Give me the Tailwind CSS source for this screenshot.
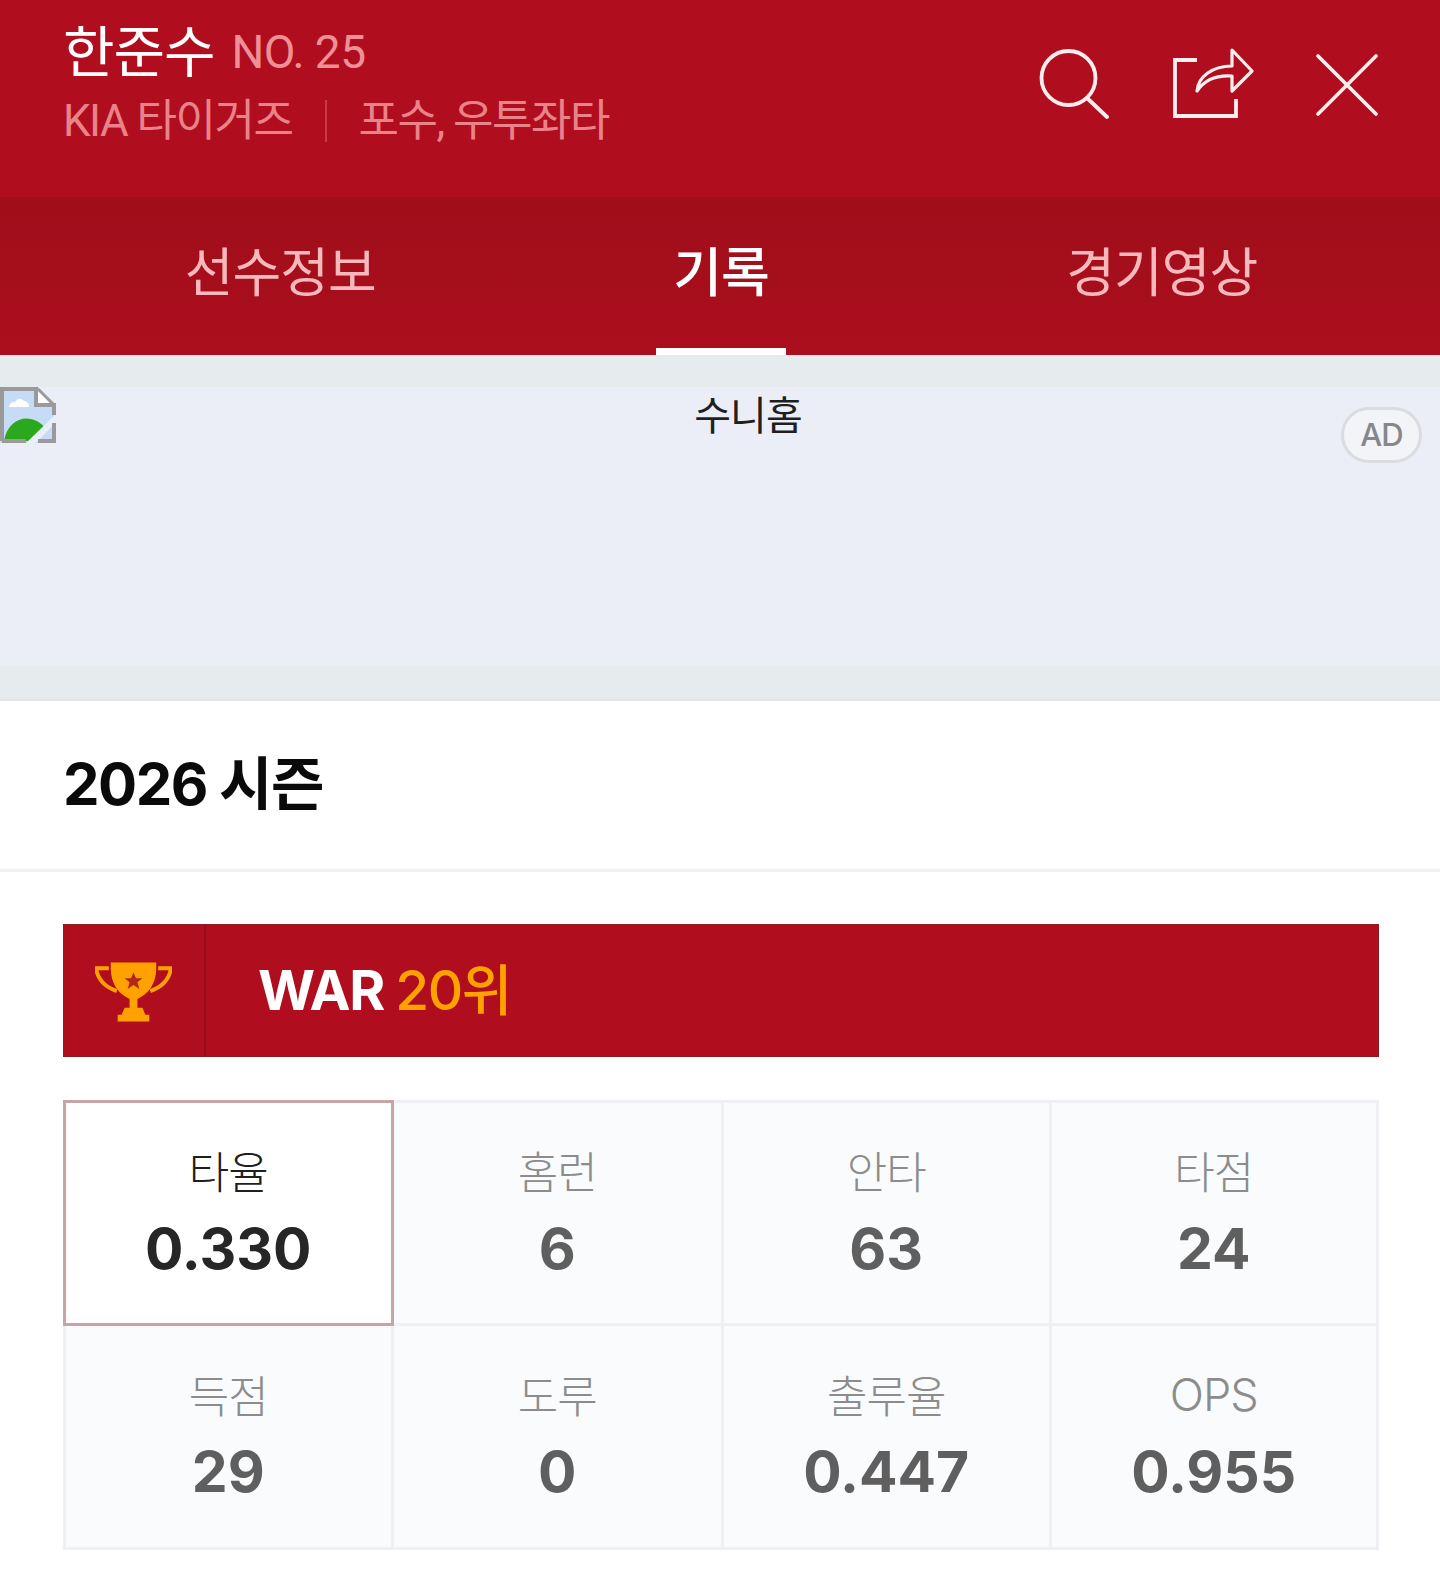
<!DOCTYPE html>
<html lang="ko">
<head>
  <meta charset="UTF-8" />
  <title>한준수 기록</title>
  <script src="https://cdn.jsdelivr.net/npm/@tailwindcss/browser@4"></script>
</head>
<body class="bg-white font-['Inter','Noto_Sans_CJK_KR',sans-serif] overflow-hidden">
  <!-- 선수 헤더 -->
  <header class="h-[197px] bg-[#b00e1f] pl-[63px] pr-[62px] flex justify-between">
    <div>
      <div class="flex items-baseline pt-[16px] h-[78px]">
        <span class="text-[56px] leading-[72px] font-normal tracking-[-1px] text-white">한준수</span>
        <span class="ml-[17px] font-['Roboto','Noto_Sans_CJK_KR',sans-serif] relative -top-[4px] text-[46px] leading-[72px] font-normal tracking-[-0.6px] text-[#ee9096]">NO. 25</span>
      </div>
      <div class="flex items-center mt-[15px] font-['Roboto','Noto_Sans_CJK_KR',sans-serif] text-[44px] leading-[56px] font-normal tracking-[-1.5px] text-[#e98389]">
        <span>KIA 타이거즈</span>
        <span class="w-0.5 h-[42px] bg-[#c63a45] mx-[32px]"></span>
        <span>포수, 우투좌타</span>
      </div>
    </div>
    <div class="flex items-start pt-[47px]">
      <svg class="w-[72px] h-[74px] mr-[63px]" viewBox="0 0 72 74" fill="none" stroke="#fdeeee" stroke-width="3.8" stroke-linecap="round">
        <circle cx="31.5" cy="31" r="27" />
        <path d="M50 51 L70 70" />
      </svg>
      <svg class="w-[82px] h-[72px] mr-[62px]" viewBox="0 0 82 72" fill="none" stroke="#fdeeee" stroke-width="3.8">
        <path d="M25 13 H3 V69 H64 V52" />
        <path d="M25 44 C26 30 40 19 60 19 V3 L80 24 L60 44 V29 C46 28 33 32 25 44 Z" stroke-linejoin="round" stroke-width="3.2" />
      </svg>
      <svg class="w-[62px] h-[62px] mt-[7px]" viewBox="0 0 62 62" fill="none" stroke="#fdeeee" stroke-width="3.6" stroke-linecap="round">
        <path d="M2 2 L60 60 M60 2 L2 60" />
      </svg>
    </div>
  </header>

  <!-- 탭 -->
  <nav class="h-[158px] bg-gradient-to-b from-[#a00e1a] to-[#ac0e1e] pl-[60px] pr-[58px] grid grid-cols-3 text-center text-[53px] leading-[152px]">
    <div class="text-[#f7b9bc] font-normal tracking-[-1px]">선수정보</div>
    <div class="relative text-white font-medium tracking-[-1px]">
      기록
      <span class="absolute bottom-0 left-1/2 -translate-x-1/2 w-[130px] h-[7px] bg-white"></span>
    </div>
    <div class="text-[#f7b9bc] font-normal tracking-[-1px]">경기영상</div>
  </nav>

  <!-- 광고 -->
  <section class="bg-[#e6ebee] pt-[32px] pb-[33px] border-b-2 border-[#e0e5e6]">
    <div class="relative h-[279px] bg-[#ebeef6] flex justify-center">
      <svg class="absolute left-0 top-0 w-[56px] h-[56px]" viewBox="0 0 56 56">
        <path d="M0 0 H38 L56 18 V56 H0 Z" fill="#c6dcf6" />
        <path d="M38 2 V18 H54 Z" fill="#fff" />
        <path d="M9 20 q1 -5 6 -5 q4 -6 9 -1 q5 0 5 6 Z" fill="#fff" />
        <path d="M4 54 C8 30 32 24 46 42 L36 54 Z" fill="#2aa81e" />
        <path d="M26 56 L56 27 V35 L36 56 Z" fill="#ebeef6" />
        <path d="M2 54 V2 H36 V18 H54 V28 M38 54 H54 V36 M2 54 H26" fill="none" stroke="#9a9a9a" stroke-width="4" />
        <path d="M38 2 L54 18" stroke="#9a9a9a" stroke-width="3" />
      </svg>
      <span class="ml-[56px] text-[40px] leading-[58px] font-normal text-[#1f1f1f] tracking-[-1px]">수니홈</span>
      <span class="absolute right-[18px] top-[20px] w-[81px] h-[56px] flex items-center justify-center rounded-full border-[3px] border-[#dadcdf] bg-[#f3f4f7] text-[#85878a] text-[31px] font-medium tracking-[-1px]">AD</span>
    </div>
  </section>

  <!-- 시즌 -->
  <div class="h-[171px] border-b-[3px] border-[#eef0f2] pl-[63px] pt-[41px]">
    <h2 class="text-[58px] leading-[84px] font-bold text-[#0a0a0a] tracking-[-1.5px]">2026 시즌</h2>
  </div>

  <section class="ml-[63px] mr-[61px] mt-[52px]">
    <div class="h-[133px] bg-[#b00e1f] border border-[#8f1a24] flex items-center">
      <div class="w-[142px] h-full flex items-center justify-center border-r-2 border-[#930d1a]">
        <svg class="w-[77px] h-[60px] mt-[3px] -ml-[2px]" viewBox="0 0 78 60">
          <path d="M16 0 H62 V6 C62 22 54 32 43 37 V46 H48 L51 53 H55 V60 H23 V53 H27 L30 46 H35 V37 C24 32 16 22 16 6 Z" fill="#ffa200" />
          <path d="M14 6 H1 C3 18 10 25 22 29 M64 6 H77 C75 18 68 25 56 29" fill="none" stroke="#ffa200" stroke-width="4" />
          <path d="M39 10 L41.5 16 H48 L43 20 L45 27 L39 23 L33 27 L35 20 L30 16 H36.5 Z" fill="#b3261e" />
        </svg>
      </div>
      <div class="ml-[52px] text-[55px] leading-none font-bold text-white tracking-[-1.5px]">WAR <span class="font-medium text-[#ffa200]">20위</span></div>
    </div>

    <div class="grid grid-cols-4 mt-[43px] border-[3px] border-[#eef0f4] bg-[#fafbfd] text-center">
      <div class="h-[226px] -m-[3px] mb-0 mr-0 relative z-10 bg-white border-[3px] border-[#c9a3a6] pt-[42px]">
        <p class="text-[44px] leading-[56px] font-light text-[#1f1f1f] tracking-[-1px]">타율</p>
        <p class="mt-[14px] text-[57px] leading-[68px] font-bold text-[#262626]">0.330</p>
      </div>
      <div class="h-[223px] border-b-[3px] border-[#eef0f4] pt-[42px]">
        <p class="text-[44px] leading-[56px] font-light text-[#8c8c8c] tracking-[-1px]">홈런</p>
        <p class="mt-[14px] text-[57px] leading-[68px] font-bold text-[#5f5f5f]">6</p>
      </div>
      <div class="h-[223px] border-l-[3px] border-b-[3px] border-[#eef0f4] pt-[42px]">
        <p class="text-[44px] leading-[56px] font-light text-[#8c8c8c] tracking-[-1px]">안타</p>
        <p class="mt-[14px] text-[57px] leading-[68px] font-bold text-[#5f5f5f]">63</p>
      </div>
      <div class="h-[223px] border-l-[3px] border-b-[3px] border-[#eef0f4] pt-[42px]">
        <p class="text-[44px] leading-[56px] font-light text-[#8c8c8c] tracking-[-1px]">타점</p>
        <p class="mt-[14px] text-[57px] leading-[68px] font-bold text-[#5f5f5f]">24</p>
      </div>
      <div class="h-[221px] border-r-[3px] border-[#eef0f4] pt-[43px]">
        <p class="text-[44px] leading-[56px] font-light text-[#8c8c8c] tracking-[-1px]">득점</p>
        <p class="mt-[13px] text-[57px] leading-[68px] font-bold text-[#5f5f5f]">29</p>
      </div>
      <div class="h-[221px] pt-[43px]">
        <p class="text-[44px] leading-[56px] font-light text-[#8c8c8c] tracking-[-1px]">도루</p>
        <p class="mt-[13px] text-[57px] leading-[68px] font-bold text-[#5f5f5f]">0</p>
      </div>
      <div class="h-[221px] border-l-[3px] border-[#eef0f4] pt-[43px]">
        <p class="text-[44px] leading-[56px] font-light text-[#8c8c8c] tracking-[-1px]">출루율</p>
        <p class="mt-[13px] text-[57px] leading-[68px] font-bold text-[#5f5f5f]">0.447</p>
      </div>
      <div class="h-[221px] border-l-[3px] border-[#eef0f4] pt-[43px]">
        <p class="relative -top-[2px] text-[45px] leading-[56px] font-light text-[#8c8c8c] tracking-[-1px]">OPS</p>
        <p class="mt-[13px] text-[57px] leading-[68px] font-bold text-[#5f5f5f]">0.955</p>
      </div>
    </div>
  </section>
</body>
</html>
